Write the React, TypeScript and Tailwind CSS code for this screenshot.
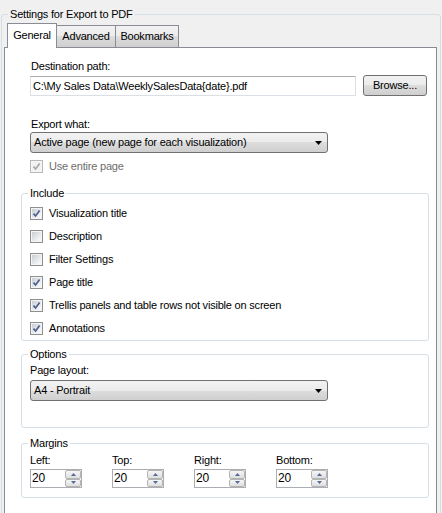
const grad = "bg-[linear-gradient(#f2f2f2,#ebebeb_50%,#dddddd_50%,#cfcfcf)]";

function Box({ checked, disabled }: { checked?: boolean; disabled?: boolean }) {
  return (
    <span
      className={
        disabled
          ? "relative flex h-[13px] w-[13px] shrink-0 items-center justify-center border border-[#b8b8b8] bg-[#f7f7f7]"
          : "relative flex h-[13px] w-[13px] shrink-0 items-center justify-center border border-[#8e8f8f] bg-[#f4f4f4]"
      }
    >
      <span
        className={
          disabled
            ? "h-[9px] w-[9px] bg-[#f2f2f2]"
            : "h-[9px] w-[9px] bg-[linear-gradient(135deg,#c9cdd3,#eef0f2_70%,#f8f8f8)]"
        }
      />
      {checked ? (
        <svg className="absolute left-0 top-0" width="11" height="11" viewBox="0 0 11 11">
          <polyline
            points="2.5,5.6 4.6,8 8.6,2.6"
            fill="none"
            stroke={disabled ? "#a8a8a8" : "#4b5f8e"}
            strokeWidth="1.7"
          />
        </svg>
      ) : null}
    </span>
  );
}

function CheckRow({ label, checked }: { label: string; checked?: boolean }) {
  return (
    <div className="flex h-[23px] items-center pt-[1px]">
      <Box checked={checked} />
      <span className="ml-[6px]">{label}</span>
    </div>
  );
}

function Arrow() {
  return (
    <svg width="7" height="4" viewBox="0 0 7 4">
      <polygon points="0,0 7,0 3.5,4" fill="#000" />
    </svg>
  );
}

function Spinner() {
  return (
    <div className="flex h-[19px] w-[52px] border border-[#abadb3] bg-white">
      <span className="flex flex-1 items-center pl-[1px] text-[12px]">20</span>
      <div className="flex w-[16px] flex-col">
        <span className="flex flex-1 items-center justify-center rounded-[2px] border border-[#b4b4b4] bg-[linear-gradient(#f6f6f6,#dedede)]">
          <svg width="5" height="3" viewBox="0 0 5 3">
            <polygon points="0,3 2.5,0 5,3" fill="#56699a" />
          </svg>
        </span>
        <span className="flex flex-1 items-center justify-center rounded-[2px] border border-[#b4b4b4] bg-[linear-gradient(#f6f6f6,#dedede)]">
          <svg width="5" height="3" viewBox="0 0 5 3">
            <polygon points="0,0 5,0 2.5,3" fill="#56699a" />
          </svg>
        </span>
      </div>
    </div>
  );
}

const margins = ["Left:", "Top:", "Right:", "Bottom:"];

export default function App() {
  return (
    <div className="h-[513px] w-[442px] overflow-hidden bg-[#f0f0f0] font-['Liberation_Sans',Arial,sans-serif] text-[11px] leading-[13px] tracking-[-0.2px] text-black">
      <fieldset className="ml-[1px] mt-[8px] w-[440px] rounded-[3px] border border-[#d5dfe5]">
        <legend className="ml-[6px] px-[2px] leading-[12px]">Settings for Export to PDF</legend>

        <div className="ml-[5px] mt-[3px] flex items-end">
          <div className="relative z-10 flex h-[25px] w-[50px] items-center justify-center border border-b-0 border-[#898c95] bg-white pb-[1px]">
            General
          </div>
          <div className={`-ml-[1px] mb-[1px] flex h-[22px] w-[60px] items-center justify-center border border-b-0 border-[#898c95] ${grad}`}>
            Advanced
          </div>
          <div className={`-ml-[1px] mb-[1px] flex h-[22px] w-[64px] items-center justify-center border border-b-0 border-[#898c95] ${grad}`}>
            Bookmarks
          </div>
        </div>

        <div className="-mt-[1px] ml-[2px] flex h-[480px] w-[433px] flex-col border border-[#898c95] bg-white">
          <div className="ml-[26px] mt-[12px]">Destination path:</div>
          <div className="mt-[2px] flex items-start">
            <div className="ml-[25px] mt-[1px] flex h-[20px] w-[326px] items-center border border-[#dbdfe6] border-t-[#abadb3] pl-[2px]">
              {"C:\\My Sales Data\\WeeklySalesData{date}.pdf"}
            </div>
            <button className={`ml-[7px] h-[21px] w-[64px] rounded-[3px] border border-[#707070] ${grad}`}>
              Browse...
            </button>
          </div>

          <div className="ml-[26px] mt-[22px]">Export what:</div>
          <div className={`ml-[25px] mt-[1px] flex h-[21px] w-[298px] items-center justify-between rounded-[3px] border border-[#707070] pl-[3px] pr-[5px] ${grad}`}>
            <span>Active page (new page for each visualization)</span>
            <Arrow />
          </div>
          <div className="ml-[25px] mt-[7px] flex h-[13px] items-center">
            <Box checked disabled />
            <span className="ml-[6px] text-[#6d6d6d]">Use entire page</span>
          </div>

          <fieldset className="ml-[16px] mt-[14px] w-[408px] rounded-[3px] border border-[#d5dfe5] pb-[1px] pl-[8px] pt-[2px]">
            <legend className="-ml-[2px] px-[2px] leading-[12px]">Include</legend>
            <CheckRow label="Visualization title" checked />
            <CheckRow label="Description" />
            <CheckRow label="Filter Settings" />
            <CheckRow label="Page title" checked />
            <CheckRow label="Trellis panels and table rows not visible on screen" checked />
            <CheckRow label="Annotations" checked />
          </fieldset>

          <fieldset className="ml-[16px] mt-[7px] w-[408px] rounded-[3px] border border-[#d5dfe5] pb-[26px] pl-[8px]">
            <legend className="-ml-[2px] px-[2px] leading-[12px]">Options</legend>
            <div className="mt-[4px]">Page layout:</div>
            <div className={`mt-[3px] flex h-[21px] w-[298px] items-center justify-between rounded-[3px] border border-[#707070] pl-[3px] pr-[5px] ${grad}`}>
              <span>A4 - Portrait</span>
              <Arrow />
            </div>
          </fieldset>

          <fieldset className="ml-[16px] mt-[9px] w-[408px] rounded-[3px] border border-[#d5dfe5] pb-[9px] pl-[8px]">
            <legend className="-ml-[2px] px-[2px] leading-[12px]">Margins</legend>
            <div className="flex">
              {margins.map((m) => (
                <div key={m} className="w-[82px]">
                  <div className="mt-[5px]">{m}</div>
                  <div className="mt-[2px]">
                    <Spinner />
                  </div>
                </div>
              ))}
            </div>
          </fieldset>
        </div>
      </fieldset>
    </div>
  );
}
